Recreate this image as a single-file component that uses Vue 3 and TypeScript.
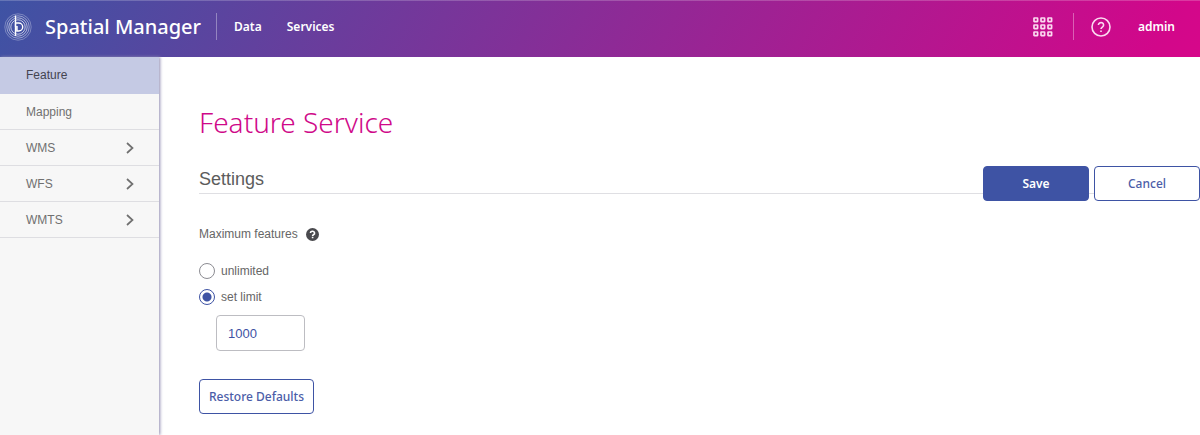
<script setup lang="ts">
import { ref } from 'vue'

interface MenuItem {
  label: string
  expandable: boolean
}

const menu: MenuItem[] = [
  { label: 'Feature', expandable: false },
  { label: 'Mapping', expandable: false },
  { label: 'WMS', expandable: true },
  { label: 'WFS', expandable: true },
  { label: 'WMTS', expandable: true },
]
const active = ref('Feature')
const mode = ref<'unlimited' | 'limit'>('limit')
const limit = ref('1000')
const cells = [0, 7, 14]

function restoreDefaults() {
  mode.value = 'limit'
  limit.value = '1000'
}
</script>

<template>
  <div class="app">
    <header class="topbar">
      <svg class="logo" viewBox="0 0 28 28" fill="none" aria-hidden="true">
        <g stroke="#fff" stroke-width="0.9">
          <circle cx="14" cy="14" r="13.2" opacity="0.35" />
          <circle cx="14" cy="14" r="11.2" opacity="0.5" />
          <circle cx="14" cy="14" r="9.2" opacity="0.65" />
          <circle cx="14" cy="14" r="7.2" opacity="0.75" />
        </g>
        <path d="M11.5 2.5V14" stroke="#fff" stroke-width="1.3" />
        <path d="M11.5 23V10h3.2a4 4 0 0 1 0 8h-1.700V13" stroke="#fff" stroke-width="1.4" />
      </svg>
      <span class="brand">Spatial Manager</span>
      <span class="divider"></span>
      <nav class="links">
        <a href="#data">Data</a>
        <a href="#services">Services</a>
      </nav>
      <div class="tools">
        <button class="icon-button" type="button" aria-label="Applications">
          <svg width="20" height="20" viewBox="0 0 20 20" fill="none" stroke="#fbd9f0" stroke-width="1.7">
            <template v-for="y in cells" :key="y">
              <rect v-for="x in cells" :key="x" :x="x + 1" :y="y + 1" width="3.6" height="3.6" rx="0.3" />
            </template>
          </svg>
        </button>
        <span class="divider soft"></span>
        <button class="icon-button" type="button" aria-label="Help">
          <svg width="20" height="20" viewBox="0 0 20 20" fill="none" stroke="#fbd9f0" stroke-width="1.6">
            <circle cx="10" cy="10" r="9" />
            <path d="M7.4 8a2.6 2.4 0 1 1 4.2 1.9c-1 .7-1.6 1-1.6 2.2M10 13.5v1.6" />
          </svg>
        </button>
        <a class="user" href="#admin">admin</a>
      </div>
    </header>

    <div class="body">
      <nav class="sidebar">
        <a
          v-for="item in menu"
          :key="item.label"
          href="#"
          :class="['item', { active: item.label === active }]"
          @click.prevent="active = item.label"
        >
          <span>{{ item.label }}</span>
          <svg v-if="item.expandable" width="8" height="12" viewBox="0 0 8 12" fill="none" stroke="#707070" stroke-width="1.7">
            <path d="M1 1l5.5 5L1 11" />
          </svg>
        </a>
      </nav>

      <main class="content">
        <h1>Feature Service</h1>
        <div class="section-head">
          <h2>Settings</h2>
          <div class="actions">
            <button class="btn primary" type="button">Save</button>
            <button class="btn" type="button">Cancel</button>
          </div>
        </div>

        <fieldset class="group">
          <legend>
            Maximum features
            <svg width="13" height="13" viewBox="0 0 12 12" aria-hidden="true">
              <circle cx="6" cy="6" r="6" fill="#4a4a4e" />
              <path d="M4.1 4.7a1.9 1.7 0 1 1 2.8 1.5c-.6.3-.8.6-.8 1.1M6.1 8v1.5" fill="none" stroke="#fff" stroke-width="1.5" />
            </svg>
          </legend>
          <label class="option">
            <input v-model="mode" type="radio" name="mode" value="unlimited" />
            unlimited
          </label>
          <label class="option">
            <input v-model="mode" type="radio" name="mode" value="limit" />
            set limit
          </label>
          <input v-model="limit" class="limit" type="text" aria-label="Feature limit" :disabled="mode !== 'limit'" />
        </fieldset>

        <button class="btn restore" type="button" @click="restoreDefaults">Restore Defaults</button>
      </main>
    </div>
  </div>
</template>

<style>
body {
  margin: 0;
  background: #fff;
}
</style>

<style scoped>
.app {
  display: flex;
  flex-direction: column;
  min-height: 100vh;
  overflow-x: hidden;
  font-family: "Liberation Sans", Arial, sans-serif;
  font-size: 12px;
  color: #666;
}

.topbar,
.topbar a,
.btn,
h1 {
  font-family: "Noto Sans", "Open Sans", sans-serif;
}

.topbar {
  box-sizing: border-box;
  display: flex;
  align-items: center;
  height: 57px;
  padding: 0 25px 4px 4px;
  background: linear-gradient(120deg, #3e53a4 0%, #d2078a 96%, #d6078a 100%);
  box-shadow: inset 0 1px rgba(255, 255, 255, 0.2);
  color: #fff;
}

.logo {
  width: 28px;
  height: 28px;
}

.brand {
  margin-left: 13px;
  font-size: 20px;
  font-weight: 500;
  line-height: 28px;
}

.divider {
  width: 1px;
  height: 27px;
  margin: 0 17px 0 15px;
  background: rgba(255, 255, 255, 0.35);
}

.divider.soft {
  margin: 0 17px 0 20px;
}

.links {
  display: flex;
  gap: 25px;
}

.topbar a {
  color: #fff;
  font-size: 12px;
  font-weight: 600;
  text-decoration: none;
}

.tools {
  display: flex;
  align-items: center;
  margin-left: auto;
}

.icon-button {
  display: flex;
  padding: 0;
  border: 0;
  background: none;
}

.topbar .user {
  margin-left: 27px;
}

.body {
  display: flex;
  flex: 1;
}

.sidebar {
  flex: 0 0 159px;
  background: #f7f7f7;
  box-shadow: 1px 0 3px #8f8ab0;
}

.item {
  box-sizing: border-box;
  display: flex;
  align-items: center;
  justify-content: space-between;
  height: 36px;
  padding: 0 25px 0 26px;
  border-bottom: 1px solid #dedee2;
  color: #707070;
  text-decoration: none;
}

.item.active {
  height: 37px;
  background: #c5cae4;
  border-color: #c5cae4;
  color: #444450;
}

.content {
  flex: 1;
  min-width: 0;
  padding: 44px 0 21px 40px;
}

h1 {
  margin: 0;
  color: #cf0989;
  font-size: 28px;
  font-weight: 300;
  line-height: 42px;
}

.section-head {
  display: flex;
  justify-content: space-between;
  align-items: flex-start;
  height: 56px;
  margin-top: 23px;
}

h2 {
  flex: 1;
  margin: 0;
  border-bottom: 1px solid #dfdfe3;
  color: #5c5c5c;
  font-size: 18px;
  font-weight: 400;
  line-height: 27px;
}

.actions {
  display: flex;
  gap: 5px;
  background: linear-gradient(#dfdfe3, #dfdfe3) 0 27px / 100% 1px no-repeat;
}

.btn {
  box-sizing: border-box;
  width: 106px;
  height: 35px;
  padding: 0;
  border: 1px solid #3e53a4;
  border-radius: 4px;
  background: #fff;
  color: #4b5da8;
  font-size: 12px;
  font-weight: 500;
}

.btn.primary {
  background: #3e53a4;
  color: #fff;
  font-weight: 600;
}

.group {
  margin: 0;
  padding: 0;
  border: 0;
}

legend {
  display: flex;
  align-items: center;
  gap: 8px;
  height: 24px;
  margin-bottom: 12px;
  padding: 0;
}

.option {
  display: flex;
  align-items: center;
  gap: 6px;
  width: max-content;
  height: 26px;
}

.option input {
  appearance: none;
  box-sizing: border-box;
  width: 16px;
  height: 16px;
  margin: 0;
  border: 1px solid #8c8c92;
  border-radius: 50%;
  background: #fff;
}

.option input:checked {
  border-color: #3e53a4;
  background: radial-gradient(circle, #3e53a4 4px, #fff 5px);
}

.limit {
  box-sizing: border-box;
  display: block;
  width: 89px;
  height: 36px;
  margin: 5px 0 0 17px;
  padding: 0 11px;
  border: 1px solid #bdbdc2;
  border-radius: 4px;
  background: #fff;
  color: #3e53a4;
  font: 13px "Liberation Sans", Arial, sans-serif;
}

.restore {
  width: 115px;
  margin-top: 28px;
}
</style>
